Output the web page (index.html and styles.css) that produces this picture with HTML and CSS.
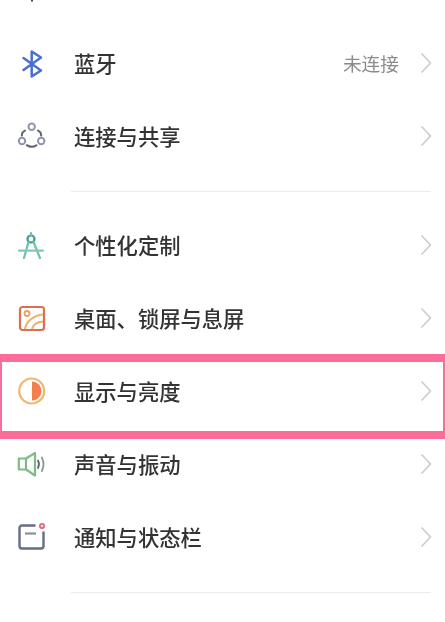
FILE: index.html
```html
<!DOCTYPE html>
<html lang="zh-CN">
<head>
    <meta charset="UTF-8">
    <meta name="viewport" content="width=device-width, initial-scale=1.0">
    <title>设置</title>
    <link rel="stylesheet" href="styles.css">
</head>
<body>
    <main class="settings">
        <!-- Connections -->
        <section class="group">
            <div class="row row-cut">
                <svg class="row-icon" viewBox="0 0 30 30"><path d="M15 21v4.500" fill="none" stroke="#444" stroke-width="2"/></svg>
                <span class="row-label">WLAN</span>
                <span class="row-value">未连接</span>
                <svg class="chevron" viewBox="0 0 12 22"><path d="M1.500 1.500 10.500 11 1.500 20.500"/></svg>
            </div>
            <div class="row">
                <svg class="row-icon" viewBox="0 0 30 30"><path d="M6.500 9 24 21.500 14.700 27.500V2.500L24 8.500 6.500 21" fill="none" stroke="#4a6fd0" stroke-width="2.500" stroke-linecap="round" stroke-linejoin="round"/></svg>
                <span class="row-label">蓝牙</span>
                <span class="row-value">未连接</span>
                <svg class="chevron" viewBox="0 0 12 22"><path d="M1.500 1.500 10.500 11 1.500 20.500"/></svg>
            </div>
            <div class="row">
                <svg class="row-icon" viewBox="0 0 30 30">
                    <g fill="none" stroke="#8e96ad" stroke-width="2">
                        <circle cx="14.700" cy="4.700" r="3.200"/>
                        <circle cx="5" cy="19" r="3.200"/>
                        <circle cx="24.200" cy="19" r="3.200"/>
                    </g>
                    <path d="M8 8.500 5.500 10.500 4.800 13.500M21 8.500 23.500 10.500 24.200 13.500M9.800 23.200Q14.700 26.500 19.500 23.200" fill="none" stroke="#5d6272" stroke-width="2" stroke-linecap="round"/>
                </svg>
                <span class="row-label">连接与共享</span>
                <svg class="chevron" viewBox="0 0 12 22"><path d="M1.500 1.500 10.500 11 1.500 20.500"/></svg>
            </div>
        </section>

        <div class="divider"></div>

        <!-- Personal -->
        <section class="group">
            <div class="row">
                <svg class="row-icon" viewBox="0 0 30 30">
                    <circle cx="14" cy="8" r="3.500" fill="none" stroke="#3f9c93" stroke-width="2.200"/>
                    <path d="M14 2v2.500M11.500 11 7 27M16.500 11 23 27" fill="none" stroke="#6cc2a8" stroke-width="2.200" stroke-linecap="round"/>
                    <path d="M2 19.700H26" fill="none" stroke="#7fcbb2" stroke-width="2.200" stroke-linecap="round"/>
                </svg>
                <span class="row-label">个性化定制</span>
                <svg class="chevron" viewBox="0 0 12 22"><path d="M1.500 1.500 10.500 11 1.500 20.500"/></svg>
            </div>
            <div class="row">
                <svg class="row-icon" viewBox="0 0 30 30">
                    <rect x="3" y="3" width="24" height="23" rx="2.500" fill="none" stroke="#d9714f" stroke-width="2.200"/>
                    <circle cx="10" cy="9.500" r="2.500" fill="none" stroke="#e8a06a" stroke-width="1.800"/>
                    <path d="M8 25C9 18 16 11.500 26 10.500M15 25C16 21 20 18 26 17.500" fill="none" stroke="#ecb26f" stroke-width="2.200"/>
                </svg>
                <span class="row-label">桌面、锁屏与息屏</span>
                <svg class="chevron" viewBox="0 0 12 22"><path d="M1.500 1.500 10.500 11 1.500 20.500"/></svg>
            </div>
            <div class="row row-highlight">
                <svg class="row-icon" viewBox="0 0 30 30">
                    <circle cx="14.700" cy="14" r="12.500" fill="none" stroke="#efb76f" stroke-width="2.200"/>
                    <path d="M15 4.500A9.500 9.500 0 0 1 15 23.500Z" fill="#f47f4c"/>
                </svg>
                <span class="row-label">显示与亮度</span>
                <svg class="chevron" viewBox="0 0 12 22"><path d="M1.500 1.500 10.500 11 1.500 20.500"/></svg>
            </div>
            <div class="row">
                <svg class="row-icon" viewBox="0 0 30 30">
                    <path d="M1.800 8.500H9L18 3V25.500L9 19.500H1.800ZM9 8.500V19.500" fill="none" stroke="#7dbb84" stroke-width="2.200" stroke-linejoin="round"/>
                    <path d="M21 10.500Q23 14.200 21 18" fill="none" stroke="#5e6b66" stroke-width="1.800" stroke-linecap="round"/>
                    <path d="M24.800 7.500Q28.300 14.200 24.800 21" fill="none" stroke="#8d9a94" stroke-width="1.800" stroke-linecap="round"/>
                </svg>
                <span class="row-label">声音与振动</span>
                <svg class="chevron" viewBox="0 0 12 22"><path d="M1.500 1.500 10.500 11 1.500 20.500"/></svg>
            </div>
            <div class="row">
                <svg class="row-icon" viewBox="0 0 30 30">
                    <path d="M18.500 2.500H5A2.500 2.500 0 0 0 2.500 5V23A2.500 2.500 0 0 0 5 25.500H24A2.500 2.500 0 0 0 26.500 23V8.500" fill="none" stroke="#666d85" stroke-width="2.400"/>
                    <path d="M8 10.500H19" fill="none" stroke="#8a90a3" stroke-width="2.200"/>
                    <circle cx="25" cy="3" r="2.200" fill="#fbd0da" stroke="#e8587a" stroke-width="1.500"/>
                </svg>
                <span class="row-label">通知与状态栏</span>
                <svg class="chevron" viewBox="0 0 12 22"><path d="M1.500 1.500 10.500 11 1.500 20.500"/></svg>
            </div>
        </section>

        <div class="divider"></div>
    </main>
</body>
</html>
```

FILE: styles.css
```css
/* General styles */
html, body {
    height: 100%;
}

body {
    margin: 0;
    overflow: hidden;
    background-color: #FFFFFF;
    color: #333333;
    font-family: "Noto Sans CJK SC", "Liberation Sans", sans-serif;
}

/* List styles */
.settings {
    margin-top: -45.400px;
    filter: blur(0.4px);
}

.row {
    display: flex;
    align-items: center;
    height: 72.800px;
    padding: 0 13px 0 17px;
    box-sizing: border-box;
    position: relative;
}

.row-icon {
    width: 30px;
    height: 30px;
    flex-shrink: 0;
    margin-right: 27px;
}

.row-label {
    flex: 1;
    font-size: 21.300px;
    font-weight: 500;
    line-height: 30px;
    margin-bottom: 2px;
}

.row-value {
    font-size: 18.700px;
    color: #8b8b8b;
    margin-right: 21px;
    margin-bottom: 2px;
}

/* First row runs off the top of the window */
.row-cut .row-label,
.row-cut .row-value {
    margin-bottom: 7px;
}

.chevron {
    width: 12px;
    height: 22px;
    flex-shrink: 0;
    margin-bottom: 2px;
}

.chevron path {
    fill: none;
    stroke: #cccccc;
    stroke-width: 1.600;
}

.divider {
    height: 1px;
    margin: 18px 14px 18px 71px;
    background-color: #ebebeb;
}

/* Pink frame over the selected row */
.row-highlight::after {
    content: "";
    position: absolute;
    top: -1.600px;
    left: 0;
    right: 0;
    bottom: -11px;
    border: 8px solid #fb6c98;
    border-width: 8px 2px;
    pointer-events: none;
}
```
